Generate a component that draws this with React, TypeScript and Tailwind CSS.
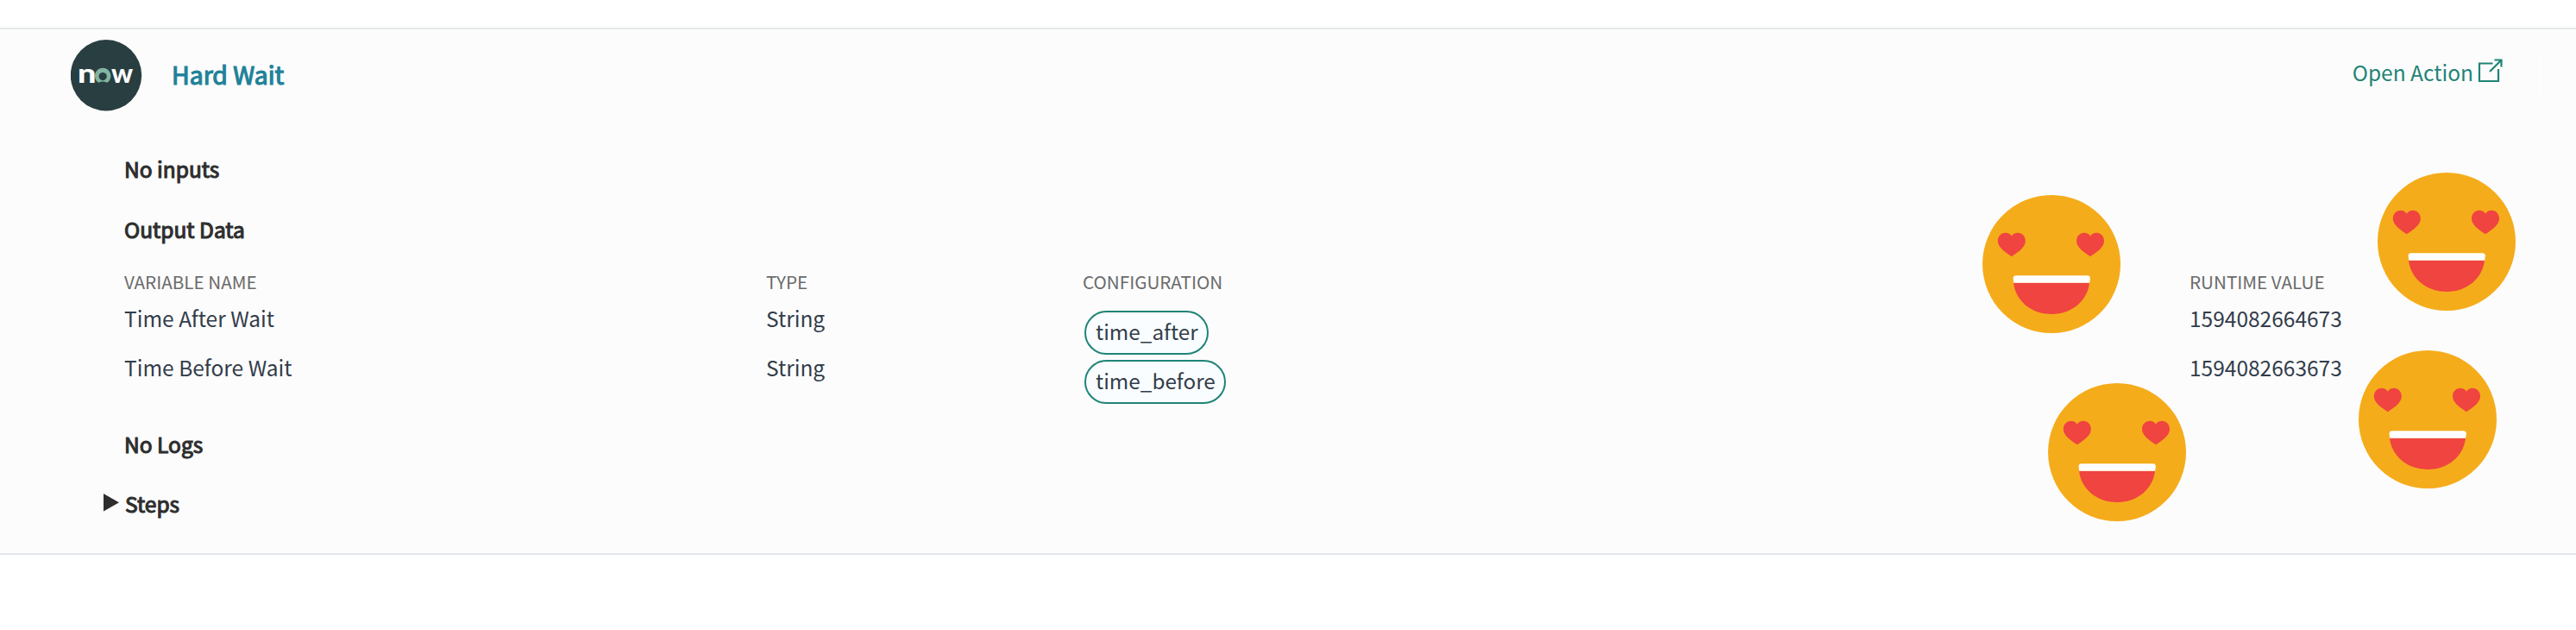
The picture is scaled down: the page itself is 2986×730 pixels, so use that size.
import type { ReactNode } from "react";

const faces = [
  "left-[2298px] top-[226px]",
  "left-[2756px] top-[200px]",
  "left-[2734px] top-[406px]",
  "left-[2374px] top-[444px]",
];

const HEART =
  "M16 27.6C10 23.4 0 17.6 0 9.6C0 3.8 4 0 8.8 0C12 0 14.6 1.6 16 4C17.4 1.6 20 0 23.2 0C28 0 32 3.8 32 9.6C32 17.6 22 23.4 16 27.6Z";

function Face({ place }: { place: string }) {
  return (
    <svg className={`absolute size-40 ${place}`} viewBox="0 0 160 160" aria-hidden="true">
      <circle cx="80" cy="80" r="80" fill="#f5ac1b" />
      <path transform="translate(17.8 43.7)" d={HEART} fill="#ef4440" />
      <path transform="translate(109 43.7)" d={HEART} fill="#ef4440" />
      <path d="M36 101.5H124C122 122 104 138 80 138C56 138 38 122 36 101.5Z" fill="#ef4440" />
      <path d="M39 93.2H121.5Q124.8 93.2 124.8 96.5L124.2 101.8H36.2L35.6 96.5Q35.6 93.2 39 93.2Z" fill="#fff" />
    </svg>
  );
}

function Heading({ children }: { children: ReactNode }) {
  return (
    <h3 className="text-[24.5px] leading-[40px] font-normal text-[#2e2e2e] [-webkit-text-stroke:1.1px_#2e2e2e]">
      {children}
    </h3>
  );
}

function Pill({ children }: { children: ReactNode }) {
  return (
    <span className="mt-[11px] ml-[2px] flex h-[51px] w-fit items-center rounded-full border-2 border-[#1f8476] bg-[#fafdff] px-[11px] pr-[10px] pb-[4px] text-[24.3px]">
      {children}
    </span>
  );
}

const rows = [
  { name: "Time After Wait", type: "String", config: "time_after", value: "1594082664673" },
  { name: "Time Before Wait", type: "String", config: "time_before", value: "1594082663673" },
];

export default function App() {
  return (
    <div className="relative h-[730px] w-[2986px] overflow-hidden bg-white pt-8 font-['Noto_Sans_CJK_SC',sans-serif] text-[24.5px] text-[#333d4b]">
      <section className="h-[611px] border-t-2 border-b-2 border-t-[#e5e8ea] border-b-[#e1e6eb] bg-[#fcfcfc]">
        <header className="flex h-[108px] items-center pl-[82px]">
          <svg className="mb-[2px] h-[84px] w-[83px]" viewBox="82 45 83 84" aria-label="now">
            <circle cx="123" cy="87.3" r="41.2" fill="#293e40" />
            <text transform="translate(90 96) scale(1.22 1)" fontSize="31" className="font-['Lato'] font-black" fill="#fff">n</text>
            <path d="M114.4 95.8A9.2 9.2 0 1 1 124 95.8Q119.2 93.4 114.4 95.8Z" fill="#81b5a1" />
            <circle cx="119.2" cy="88.6" r="4.6" fill="#293e40" />
            <text x="129" y="96" fontSize="31" className="font-['Lato'] font-black" fill="#fff">w</text>
          </svg>
          <h2 className="mb-1 ml-[34px] text-[28.4px] leading-[40px] font-normal text-[#1f8299] [-webkit-text-stroke:1.2px_#1f8299]">
            Hard Wait
          </h2>
          <a className="mb-[9px] ml-auto flex items-center leading-[40px] text-[#1f8476]">
            Open Action
            <svg className="mb-[3px] ml-[5px] h-7 w-[29px]" viewBox="0 0 29 28" fill="none" stroke="#1f8476" strokeWidth="2.2">
              <path d="M17.5 5.5H2V26H24V12M19.5 1.5H27.5V9.5M27 2L14 15" />
            </svg>
          </a>
          <div className="mr-[41px] ml-[42px] h-[47px] w-[2px] bg-white" />
        </header>
        <div className="pt-[34px] pl-36">
          <Heading>No inputs</Heading>
          <div className="pt-[30px]">
            <Heading>Output Data</Heading>
          </div>
          <div className="mt-[20px] grid grid-cols-[744px_367px_1283px_auto] text-[20.65px] leading-[40px] text-[#6b6b6b]">
            <span>VARIABLE NAME</span>
            <span>TYPE</span>
            <span>CONFIGURATION</span>
            <span>RUNTIME VALUE</span>
          </div>
          <div className="mt-[3px]">
            {rows.map((r) => (
              <div key={r.name} className="grid h-[57px] grid-cols-[744px_367px_1283px_auto] leading-[40px]">
                <span>{r.name}</span>
                <span>{r.type}</span>
                <Pill>{r.config}</Pill>
                <span>{r.value}</span>
              </div>
            ))}
          </div>
          <div className="pt-[32px]">
            <Heading>No Logs</Heading>
          </div>
          <div className="-ml-6 flex pt-[29px]">
            <svg className="mt-[8px] mr-[7px] h-[20.5px] w-[18px]" viewBox="0 0 18 20.5" fill="#2e2e2e">
              <path d="M0 0L18 10.2L0 20.5Z" />
            </svg>
            <Heading>Steps</Heading>
          </div>
        </div>
      </section>
      {faces.map((place) => (
        <Face key={place} place={place} />
      ))}
    </div>
  );
}
